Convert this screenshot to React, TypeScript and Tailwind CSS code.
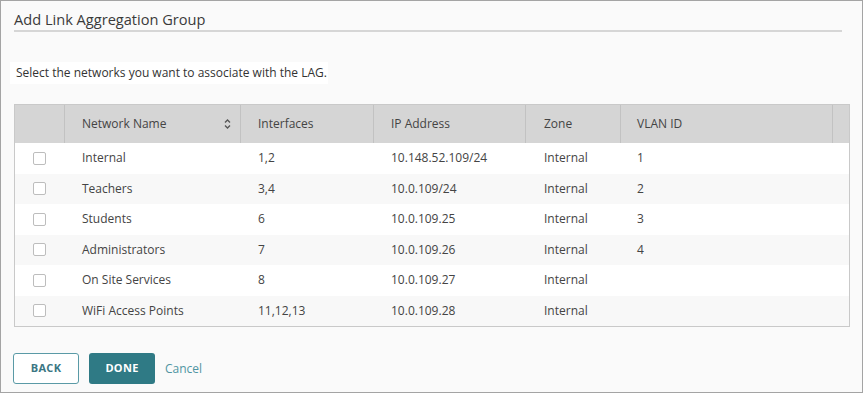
import React from "react";

const rows = [
  { name: "Internal", ifs: "1,2", ip: "10.148.52.109/24", zone: "Internal", vlan: "1" },
  { name: "Teachers", ifs: "3,4", ip: "10.0.109/24", zone: "Internal", vlan: "2" },
  { name: "Students", ifs: "6", ip: "10.0.109.25", zone: "Internal", vlan: "3" },
  { name: "Administrators", ifs: "7", ip: "10.0.109.26", zone: "Internal", vlan: "4" },
  { name: "On Site Services", ifs: "8", ip: "10.0.109.27", zone: "Internal", vlan: "" },
  { name: "WiFi Access Points", ifs: "11,12,13", ip: "10.0.109.28", zone: "Internal", vlan: "" },
];

const cols = "grid grid-cols-[49px_176px_133px_152px_95px_212px_1fr]";

function SortIcon() {
  return (
    <svg width="7" height="10" viewBox="0 0 7 10" className="mr-[9px]">
      <path d="M1 3.5 L3.5 1 L6 3.5" fill="none" stroke="#555" strokeWidth="1.3" />
      <path d="M1 6.5 L3.5 9 L6 6.5" fill="none" stroke="#555" strokeWidth="1.3" />
    </svg>
  );
}

export default function App() {
  return (
    <div
      className="w-[863px] h-[393px] border border-[#a4a4a4] bg-[#fafafa] text-[#444] overflow-hidden"
      style={{ fontFamily: "'Open Sans', 'Noto Sans', sans-serif" }}
    >
      <div className="mx-[13px] w-[828px] pt-[8px] pb-[1px] border-b-2 border-[#d6d6d6]">
        <h1 className="text-[14.6px] leading-[20px] text-[#3a3a3a]">Add Link Aggregation Group</h1>
      </div>

      <div className="mt-[30px] ml-[9px] w-[318px] h-[22px] bg-white flex items-center pl-[6px] text-[12px] text-[#333]">
        Select the networks you want to associate with the LAG.
      </div>

      <div className="mt-[20px] ml-[13px] w-[836px] border border-[#c9c9c9] bg-white text-[12px]">
        <div className={`${cols} h-[38px] bg-[#d5d5d5] text-[#444]`}>
          <div />
          <div className="border-l border-[#c2c2c2] flex items-center justify-between pl-[17px]">
            <span>Network Name</span>
            <SortIcon />
          </div>
          <div className="border-l border-[#c2c2c2] flex items-center pl-[17px]">Interfaces</div>
          <div className="border-l border-[#c2c2c2] flex items-center pl-[17px]">IP Address</div>
          <div className="border-l border-[#c2c2c2] flex items-center pl-[18px]">Zone</div>
          <div className="border-l border-[#c2c2c2] flex items-center pl-[16px]">VLAN ID</div>
          <div className="border-l border-[#c2c2c2]" />
        </div>
        {rows.map((r, i) => (
          <div
            key={r.name}
            className={`${cols} h-[30.5px] items-center text-[#444] ${i % 2 === 1 ? "bg-[#f8f8f8]" : "bg-white"}`}
          >
            <div className="flex justify-center">
              <div className="w-[13px] h-[13px] border border-[#bdbdbd] rounded-[2px] bg-white" />
            </div>
            <div className="pl-[18px]">{r.name}</div>
            <div className="pl-[18px]">{r.ifs}</div>
            <div className="pl-[18px]">{r.ip}</div>
            <div className="pl-[19px]">{r.zone}</div>
            <div className="pl-[17px]">{r.vlan}</div>
            <div />
          </div>
        ))}
      </div>

      <div className="mt-[26px] ml-[12px] flex items-center gap-[10px]">
        <button className="w-[66px] h-[31px] border border-[#5a9aa6] rounded-[3px] bg-white text-[#3b7683] text-[11px] font-bold tracking-[0.3px]">
          BACK
        </button>
        <button className="w-[66px] h-[31px] rounded-[3px] bg-[#2f7a85] text-white text-[11px] font-bold tracking-[0.3px]">
          DONE
        </button>
        <span className="text-[12px] text-[#4f95a2]">Cancel</span>
      </div>
    </div>
  );
}
